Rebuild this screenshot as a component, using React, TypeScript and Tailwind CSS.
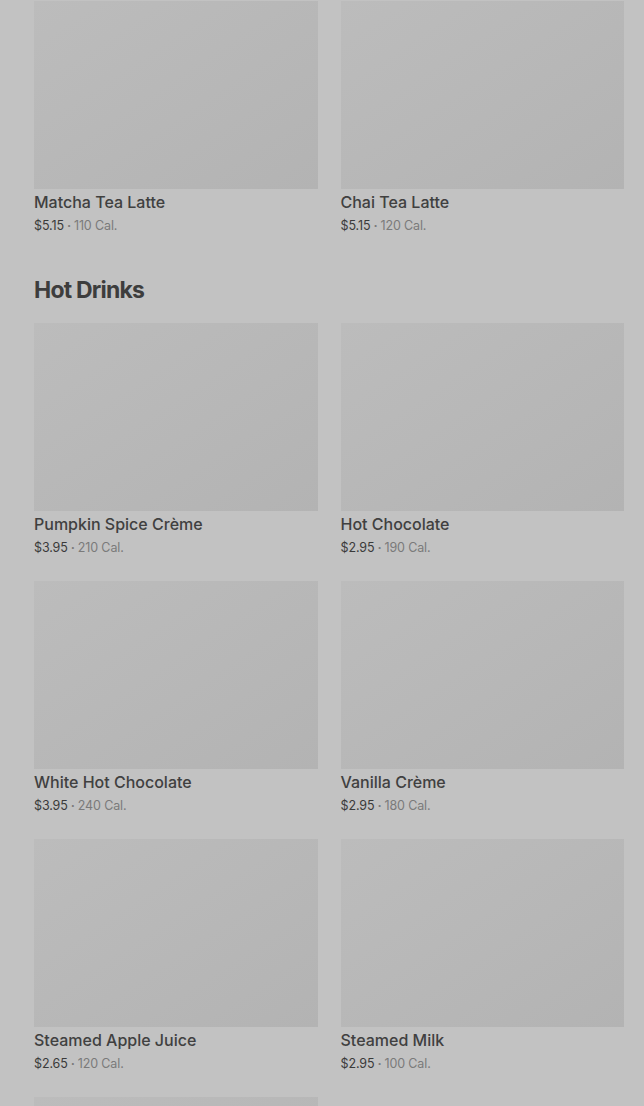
const teaLattes = [
  { name: "Matcha Tea Latte", price: "$5.15", cal: "110 Cal." },
  { name: "Chai Tea Latte", price: "$5.15", cal: "120 Cal." },
];

const hotDrinks = [
  { name: "Pumpkin Spice Crème", price: "$3.95", cal: "210 Cal." },
  { name: "Hot Chocolate", price: "$2.95", cal: "190 Cal." },
  { name: "White Hot Chocolate", price: "$3.95", cal: "240 Cal." },
  { name: "Vanilla Crème", price: "$2.95", cal: "180 Cal." },
  { name: "Steamed Apple Juice", price: "$2.65", cal: "120 Cal." },
  { name: "Steamed Milk", price: "$2.95", cal: "100 Cal." },
];

type Item = { name: string; price: string; cal: string };

function ItemCard({ item }: { item: Item }) {
  return (
    <div className="flex flex-col">
      <div className="h-[188px] w-full bg-gradient-to-br from-[#bcbcbc] to-[#b3b3b3]" />
      <p className="mt-[3px] text-[16px] leading-[20px] font-medium text-[#404040]">
        {item.name}
      </p>
      <p className="mt-[4px] text-[12.5px] leading-[20px] tracking-[-0.01em] text-[#7a7a7a]">
        <span className="text-[#3a3a3a]">{item.price}</span>
        <span className="mx-[3px] font-bold">·</span>
        {item.cal}
      </p>
    </div>
  );
}

export default function App() {
  return (
    <div
      className="h-[1106px] w-full overflow-hidden bg-[#c2c2c2] pl-[34px] pr-[20px]"
      style={{ fontFamily: "Inter, 'Liberation Sans', sans-serif" }}
    >
      <div className="grid grid-cols-2 gap-x-[23px] pt-px">
        {teaLattes.map((item) => (
          <ItemCard key={item.name} item={item} />
        ))}
      </div>

      <h2 className="mt-[38px] text-[23px] leading-[32px] font-bold tracking-[-0.035em] text-[#3d3d3d]">
        Hot Drinks
      </h2>

      <div className="mt-[17px] grid grid-cols-2 gap-x-[23px] gap-y-[23px]">
        {hotDrinks.map((item) => (
          <ItemCard key={item.name} item={item} />
        ))}
        {/* next card, only its picture top is in view */}
        <div className="h-[188px] w-full bg-gradient-to-br from-[#bcbcbc] to-[#b3b3b3]" />
      </div>
    </div>
  );
}
